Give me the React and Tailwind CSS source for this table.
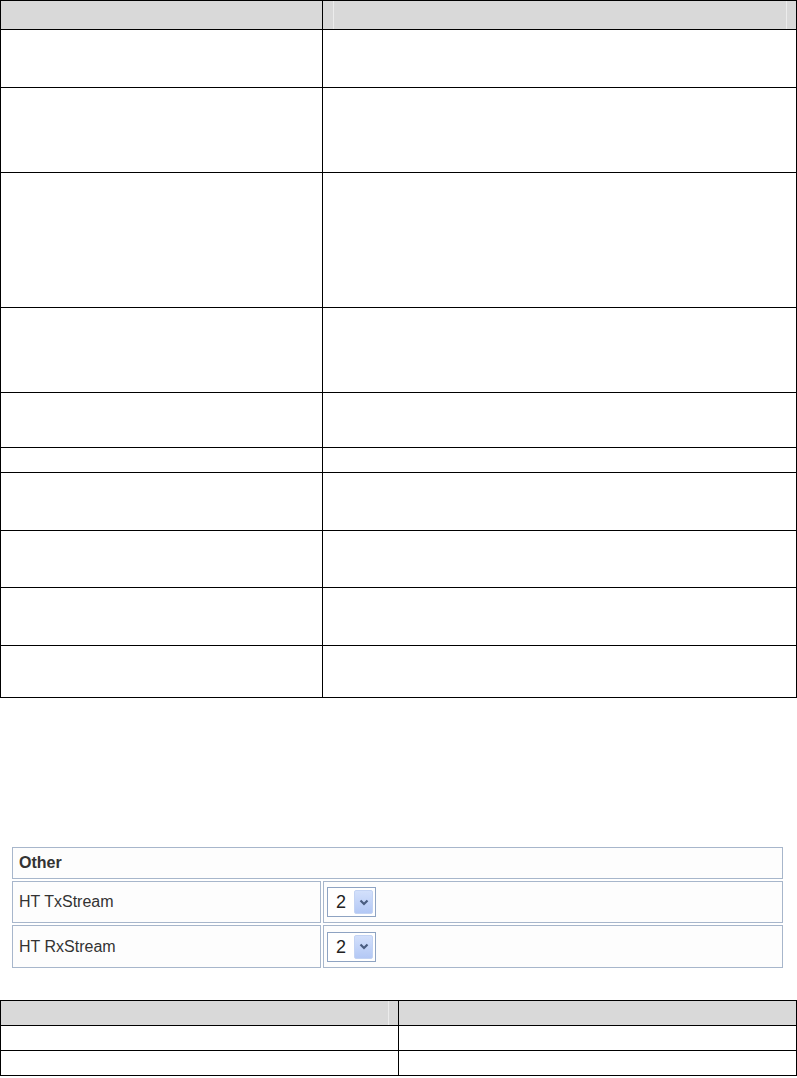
import React from "react";

const topRows = [58, 85, 135, 85, 55, 25, 58, 57, 58, 52];
const bottomRows = [25, 25];

function Chevron() {
  return (
    <svg width="10" height="7" viewBox="0 0 10 7">
      <path d="M1.5 1.5 L5 5 L8.5 1.5" fill="none" stroke="#4a5d80" strokeWidth="2.2" />
    </svg>
  );
}

function FakeSelect({ value }) {
  return (
    <div className="flex h-[30px] w-[49px] items-center border border-[#8ea3c2] bg-white p-[2px]">
      <span className="flex-1 pl-[6px] text-[18px] leading-none text-[#222]">{value}</span>
      <span className="flex h-full w-[19px] items-center justify-center rounded-[2px] border border-[#c3d3f3] bg-gradient-to-b from-[#d3e0fb] to-[#b3c8f5]">
        <Chevron />
      </span>
    </div>
  );
}

export default function App() {
  return (
    <div className="w-[797px] bg-white font-[Liberation_Sans,Arial,sans-serif]">
      {/* top spec table */}
      <div className="border-x border-t border-black">
        <div className="flex h-[29px] border-b border-black bg-[#d9d9d9]">
          <div className="w-[322px] border-r border-black" />
          <div className="flex flex-1">
            <div className="ml-[10px] mr-[9px] flex-1 border-x border-[#ececec]" />
          </div>
        </div>
        {topRows.map((h, i) => (
          <div key={i} className="flex border-b border-black" style={{ height: h }}>
            <div className="w-[322px] border-r border-black" />
            <div className="flex-1" />
          </div>
        ))}
      </div>

      {/* Other panel */}
      <div className="pt-[149px] pl-[12px] pr-[14px] text-[16px] text-[#333]">
        <div className="flex h-[32px] items-center border border-[#a7b6cb] bg-[#fdfdfd] px-[6px] font-bold">
          Other
        </div>
        <div className="mt-[2px] flex h-[42px] gap-[2px]">
          <div className="flex w-[309px] items-center border border-[#a7b6cb] bg-[#fdfdfd] px-[6px]">HT TxStream</div>
          <div className="flex flex-1 items-center border border-[#a7b6cb] bg-[#fdfdfd] px-[3px]">
            <FakeSelect value="2" />
          </div>
        </div>
        <div className="mt-[2px] flex h-[43px] gap-[2px]">
          <div className="flex w-[309px] items-center border border-[#a7b6cb] bg-[#fdfdfd] px-[6px]">HT RxStream</div>
          <div className="flex flex-1 items-center border border-[#a7b6cb] bg-[#fdfdfd] px-[3px]">
            <FakeSelect value="2" />
          </div>
        </div>
      </div>

      {/* bottom table */}
      <div className="mt-[32px] border-x border-t border-black">
        <div className="flex h-[25px] border-b border-black bg-[#d9d9d9]">
          <div className="flex w-[398px] border-r border-black">
            <div className="mr-[9px] flex-1 border-r border-[#ececec]" />
          </div>
          <div className="flex-1" />
        </div>
        {bottomRows.map((h, i) => (
          <div key={i} className="flex border-b border-black" style={{ height: h }}>
            <div className="w-[398px] border-r border-black" />
            <div className="flex-1" />
          </div>
        ))}
      </div>
    </div>
  );
}
